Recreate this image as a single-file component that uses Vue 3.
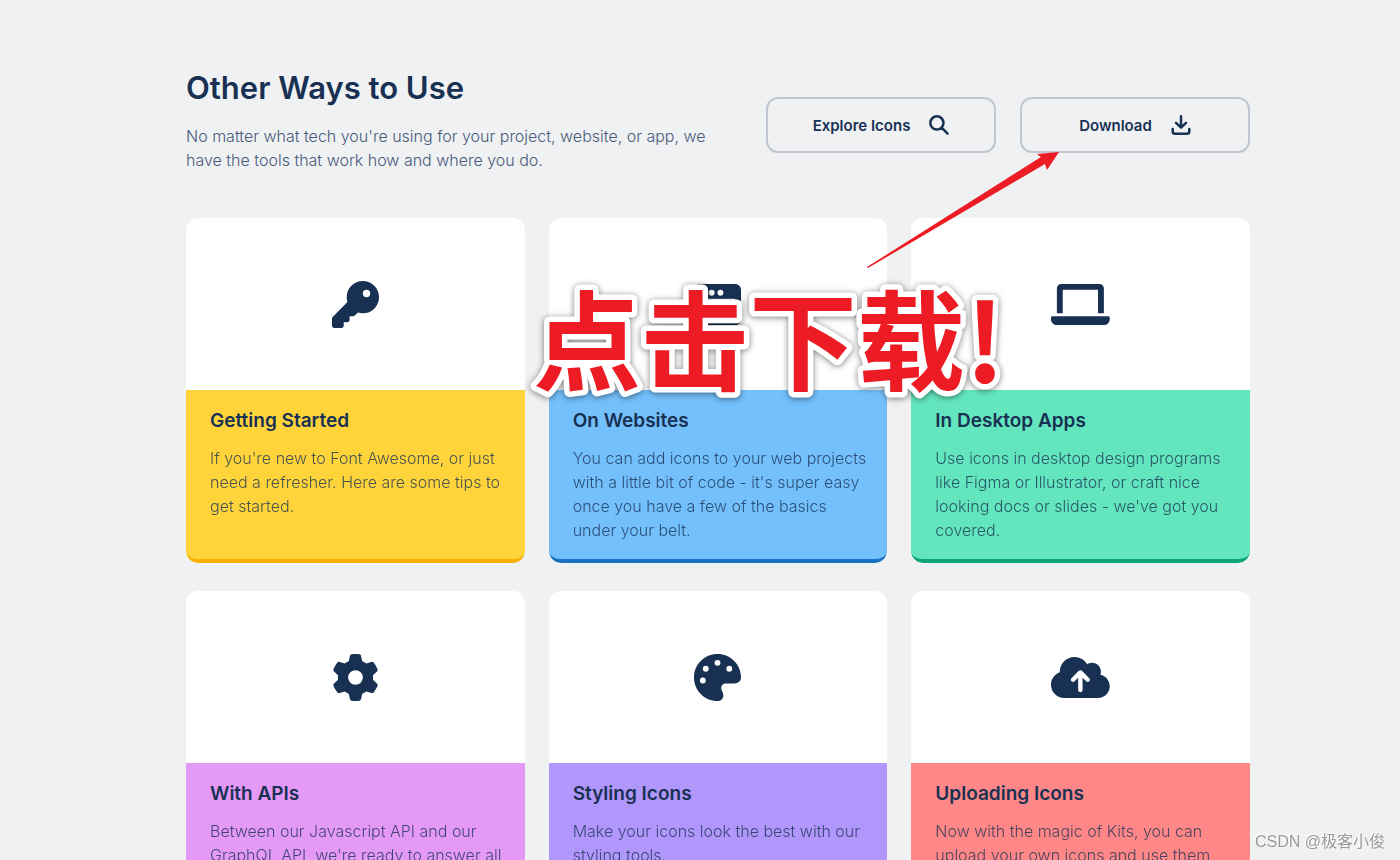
<script setup>
const actions = [
  {
    label: 'Explore Icons',
    path: 'M202 34a168 168 0 1 0 0 336 168 168 0 1 0 0-336zM324 324L476 476',
  },
  {
    label: 'Download',
    path: 'M256 32V320M128 202l128 122 128-122M44 360v60q0 60 60 60h304q60 0 60-60v-60',
  },
];

const cards = [
  {
    title: 'Getting Started',
    lines: ["If you're new to Font Awesome, or just", 'need a refresher. Here are some tips to', 'get started.'],
    color: 'yellow',
    box: '0 0 512 512',
    path: 'M336 352c97.2 0 176-78.8 176-176S433.2 0 336 0S160 78.8 160 176c0 18.7 2.9 36.8 8.3 53.7L7 391c-4.5 4.5-7 10.6-7 17v80c0 13.3 10.7 24 24 24h80c13.3 0 24-10.7 24-24V448h40c13.3 0 24-10.7 24-24V384h40c6.4 0 12.5-2.5 17-7l33.3-33.3c16.9 5.4 35 8.3 53.7 8.3zM376 96a40 40 0 1 1 0 80 40 40 0 1 1 0-80z',
  },
  {
    title: 'On Websites',
    lines: ['You can add icons to your web projects', "with a little bit of code - it's super easy", 'once you have a few of the basics', 'under your belt.'],
    color: 'blue',
    box: '0 0 512 512',
    path: 'M64 32h384c35 0 64 29 64 64v320c0 35-29 64-64 64H64c-35 0-64-29-64-64V96c0-35 29-64 64-64zM64 192v224h384V192zM96 96a32 32 0 1 0 0 64 32 32 0 1 0 0-64zM192 96a32 32 0 1 0 0 64 32 32 0 1 0 0-64zM288 96a32 32 0 1 0 0 64 32 32 0 1 0 0-64z',
  },
  {
    title: 'In Desktop Apps',
    lines: ['Use icons in desktop design programs', 'like Figma or Illustrator, or craft nice', "looking docs or slides - we've got you", 'covered.'],
    color: 'green',
    box: '0 0 640 512',
    path: 'M128 96h384v256h64V80c0-26.5-21.5-48-48-48H112C85.5 32 64 53.5 64 80v272h64V96zM624 384H16c-8.8 0-16 7.2-16 16v16c0 35.2 28.8 64 64 64h512c35.2 0 64-28.8 64-64v-16c0-8.8-7.2-16-16-16z',
  },
  {
    title: 'With APIs',
    lines: ['Between our Javascript API and our', "GraphQL API, we're ready to answer all"],
    color: 'pink',
    box: '0 0 512 512',
    path: 'M495.9 166.6c3.2 8.7 .5 18.4-6.4 24.6l-43.3 39.4c1.1 8.3 1.7 16.8 1.7 25.4s-.6 17.1-1.7 25.4l43.3 39.4c6.9 6.2 9.6 15.9 6.4 24.6c-4.4 11.9-9.7 23.3-15.8 34.3l-4.7 8.1c-6.6 11-14 21.4-22.1 31.2c-5.9 7.2-15.7 9.6-24.5 6.8l-55.7-17.7c-13.4 10.3-28.2 18.9-44 25.4l-12.5 57.1c-2 9.1-9 16.3-18.2 17.8c-13.8 2.3-28 3.5-42.5 3.5s-28.7-1.2-42.5-3.5c-9.2-1.5-16.2-8.7-18.2-17.8l-12.5-57.1c-15.8-6.5-30.6-15.1-44-25.4L83.1 425.9c-8.8 2.8-18.6 .3-24.5-6.8c-8.1-9.8-15.5-20.2-22.1-31.2l-4.7-8.1c-6.1-11-11.4-22.4-15.8-34.3c-3.2-8.7-.5-18.4 6.4-24.6l43.3-39.4C64.6 273.1 64 264.6 64 256s.6-17.1 1.7-25.4L22.4 191.2c-6.9-6.2-9.6-15.9-6.4-24.6c4.4-11.9 9.7-23.3 15.8-34.3l4.7-8.1c6.6-11 14-21.4 22.1-31.2c5.9-7.2 15.7-9.6 24.5-6.8l55.7 17.7c13.4-10.3 28.2-18.9 44-25.4l12.5-57.1c2-9.1 9-16.3 18.2-17.8C227.3 1.2 241.5 0 256 0s28.7 1.2 42.5 3.5c9.2 1.5 16.2 8.7 18.2 17.8l12.5 57.1c15.8 6.5 30.6 15.1 44 25.4l55.7-17.7c8.8-2.8 18.6-.3 24.5 6.8c8.1 9.8 15.5 20.2 22.1 31.2l4.7 8.1c6.1 11 11.4 22.4 15.8 34.3zM256 336a80 80 0 1 0 0-160 80 80 0 1 0 0 160z',
  },
  {
    title: 'Styling Icons',
    lines: ['Make your icons look the best with our', 'styling tools.'],
    color: 'purple',
    box: '0 0 512 512',
    path: 'M512 256c0 .9 0 1.8 0 2.7c-.4 36.5-33.6 61.3-70.1 61.3H344c-26.5 0-48 21.5-48 48c0 3.4 .4 6.7 1 9.9c2.1 10.2 6.5 20 10.8 29.9c6.1 13.8 12.1 27.5 12.1 42c0 31.8-21.6 60.7-53.4 62c-3.5 .1-7 .2-10.6 .2C114.6 512 0 397.4 0 256S114.6 0 256 0S512 114.6 512 256zM128 288a32 32 0 1 0-64 0 32 32 0 1 0 64 0zm0-96a32 32 0 1 0 0-64 32 32 0 1 0 0 64zM288 96a32 32 0 1 0-64 0 32 32 0 1 0 64 0zm96 96a32 32 0 1 0 0-64 32 32 0 1 0 0 64z',
  },
  {
    title: 'Uploading Icons',
    lines: ['Now with the magic of Kits, you can', 'upload your own icons and use them'],
    color: 'red',
    box: '0 0 640 512',
    path: 'M144 480C64.5 480 0 415.5 0 336c0-62.8 40.2-116.2 96.2-135.9c-.1-2.7-.2-5.4-.2-8.1c0-88.4 71.6-160 160-160c59.3 0 111 32.2 138.7 80.2C409.9 102 428.3 96 448 96c53 0 96 43 96 96c0 12.2-2.3 23.8-6.4 34.6C596 238.4 640 290.1 640 352c0 70.7-57.3 128-128 128H144zm79-217c-9.4 9.4-9.4 24.6 0 33.9s24.6 9.4 33.9 0l39-39V392c0 13.3 10.7 24 24 24s24-10.7 24-24V257.9l39 39c9.4 9.4 24.6 9.4 33.9 0s9.4-24.6 0-33.9l-80-80c-9.4-9.4-24.6-9.4-33.9 0l-80 80z',
  },
];
</script>

<template>
  <main class="page">
    <header class="intro">
      <div class="intro-text">
        <h1>Other Ways to Use</h1>
        <p>
          No matter what tech you're using for your project, website, or app, we<br />
          have the tools that work how and where you do.
        </p>
      </div>
      <div class="actions">
        <button v-for="action in actions" :key="action.label" type="button" class="action">
          {{ action.label }}
          <svg class="action-icon" viewBox="0 0 512 512" aria-hidden="true">
            <path :d="action.path" />
          </svg>
        </button>
      </div>
    </header>

    <section class="cards">
      <a v-for="card in cards" :key="card.title" href="#" class="card" :class="card.color">
        <div class="card-top">
          <svg class="card-icon" :viewBox="card.box" aria-hidden="true">
            <path :d="card.path" fill-rule="evenodd" />
          </svg>
        </div>
        <div class="card-body">
          <h2>{{ card.title }}</h2>
          <p>
            <template v-for="line in card.lines" :key="line">{{ line }}<br /></template>
          </p>
        </div>
      </a>
    </section>

    <svg class="arrow" viewBox="0 0 192 118" aria-hidden="true">
      <path d="M0 115L174 5L170 2L192 0L180 18L178 12L1 116z" />
    </svg>
    <svg class="callout" viewBox="0 0 480 130">
      <text x="0" y="111">点击下载!</text>
    </svg>
    <div class="watermark">CSDN @极客小俊</div>
  </main>
</template>

<style>
body {
  margin: 0;
  background: #eff1f3;
}
</style>

<style scoped>
.page {
  position: relative;
  padding: 68px 150px 28px 186px;
  color: #183153;
  font-family: Inter, 'Noto Sans CJK SC', sans-serif;
}

.intro {
  display: flex;
  justify-content: space-between;
  align-items: center;
  gap: 24px;
  margin-bottom: 46px;
}

h1 {
  margin: 0 0 16px;
  font-size: 31px;
  line-height: 40px;
  font-weight: 600;
}

p {
  margin: 0;
  font-size: 16px;
  line-height: 24px;
  font-weight: 300;
  white-space: nowrap;
}

.intro p {
  color: #4a5a7a;
}

.actions {
  display: flex;
  gap: 24px;
  padding-top: 10px;
}

.action {
  display: flex;
  justify-content: center;
  align-items: center;
  gap: 19px;
  width: 230px;
  height: 56px;
  border: 2px solid #c1c6d1;
  border-radius: 12px;
  background: transparent;
  color: inherit;
  font-family: inherit;
  font-size: 15px;
  font-weight: 600;
  cursor: pointer;
}

.action-icon {
  width: 20px;
  height: 20px;
  overflow: visible;
  fill: none;
  stroke: currentColor;
  stroke-width: 64;
  stroke-linecap: round;
  stroke-linejoin: round;
}

.cards {
  display: grid;
  grid-template-columns: repeat(3, 1fr);
  gap: 28px 24px;
}

.card {
  display: flex;
  flex-direction: column;
  overflow: hidden;
  border-radius: 12px;
  background: #fff;
  color: inherit;
  text-decoration: none;
}

.card-top {
  display: flex;
  justify-content: center;
  align-items: center;
  height: 172px;
}

.card-icon {
  height: 47px;
  fill: currentColor;
}

.card-body {
  flex: 1;
  box-sizing: border-box;
  min-height: 173px;
  padding: 16px 24px;
  border-bottom: 4px solid;
  border-radius: 0 0 12px 12px;
}

h2 {
  margin: 0 0 10px;
  font-size: 19px;
  line-height: 30px;
  font-weight: 600;
}

.card p {
  opacity: 0.8;
}

.yellow .card-body {
  background: #ffd43b;
  border-color: #fab005;
}

.blue .card-body {
  background: #74c0fc;
  border-color: #1971c2;
}

.green .card-body {
  background: #63e6be;
  border-color: #0ca678;
}

.pink .card-body {
  background: #e599f7;
  border-color: #be4bdb;
}

.purple .card-body {
  background: #b197fc;
  border-color: #7048e8;
}

.red .card-body {
  background: #ff8787;
  border-color: #e03131;
}

.arrow {
  position: absolute;
  top: 152px;
  left: 867px;
  width: 192px;
  height: 118px;
  fill: #ed1c24;
}

.callout {
  position: absolute;
  top: 271px;
  left: 533px;
  width: 480px;
  height: 130px;
  overflow: visible;
  fill: #ed1c24;
  stroke: #fff;
  stroke-width: 11px;
  stroke-linejoin: round;
  paint-order: stroke fill;
  font-family: 'Noto Sans CJK SC', sans-serif;
  font-size: 108px;
  font-weight: 700;
  filter: drop-shadow(0 1px 3px rgba(0, 0, 0, 0.5));
}

.watermark {
  position: fixed;
  right: 15px;
  bottom: 6px;
  color: #999;
  font-family: 'Liberation Sans', 'Noto Sans CJK SC', sans-serif;
  font-size: 16px;
  line-height: 24px;
  text-shadow: -1px -1px 0 #fff;
}
</style>
